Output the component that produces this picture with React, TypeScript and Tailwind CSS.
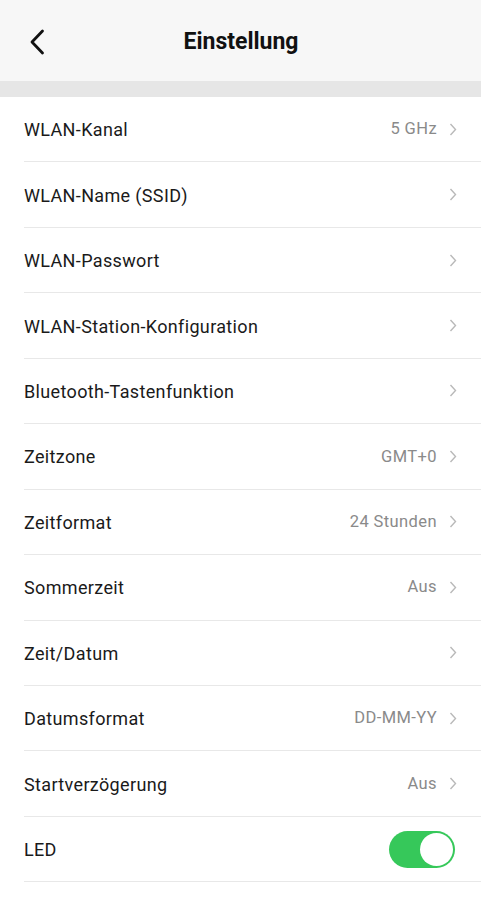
import React from "react";

const rows: { label: string; value?: string; toggle?: boolean }[] = [
  { label: "WLAN-Kanal", value: "5 GHz" },
  { label: "WLAN-Name (SSID)" },
  { label: "WLAN-Passwort" },
  { label: "WLAN-Station-Konfiguration" },
  { label: "Bluetooth-Tastenfunktion" },
  { label: "Zeitzone", value: "GMT+0" },
  { label: "Zeitformat", value: "24 Stunden" },
  { label: "Sommerzeit", value: "Aus" },
  { label: "Zeit/Datum" },
  { label: "Datumsformat", value: "DD-MM-YY" },
  { label: "Startverzögerung", value: "Aus" },
  { label: "LED", toggle: true },
];

function Chevron() {
  return (
    <svg width="8" height="13" viewBox="0 0 8 13" className="ml-[12px]">
      <path d="M1.5 1 L6.5 6.5 L1.5 12" fill="none" stroke="#b9b9b9" strokeWidth="1.4" />
    </svg>
  );
}

export default function App() {
  return (
    <div className="w-[481px] h-[900px] bg-white overflow-hidden" style={{ fontFamily: "Roboto, 'Noto Sans', sans-serif" }}>
      <div className="h-[81px] bg-[#f7f7f7] relative flex items-center justify-center">
        <svg width="16" height="26" viewBox="0 0 16 26" className="absolute left-[29px] top-[29px]">
          <path d="M13.5 2 L3 13 L13.5 24" fill="none" stroke="#111" strokeWidth="2.8" strokeLinecap="round" strokeLinejoin="round" />
        </svg>
        <span className="text-[23px] font-bold text-[#111] mt-[4px] ml-[1px]">Einstellung</span>
      </div>
      <div className="h-[16px] bg-[#e6e6e6]" />
      <div className="pl-[24px]">
        {rows.map((r) => (
          <div key={r.label} className="h-[65.45px] border-b border-[#e8e8e8] flex items-center pr-[24px]">
            <span className="flex-1 text-[18px] tracking-[0.35px] text-[#1a1a1a] mt-[1px]">{r.label}</span>
            {r.toggle ? (
              <div className="w-[66px] h-[37px] rounded-full bg-[#36c85a] flex items-center justify-end pr-[2px] mr-[2px]">
                <div className="w-[33px] h-[33px] rounded-full bg-white" />
              </div>
            ) : (
              <>
                {r.value && <span className="text-[16.5px] tracking-[0.4px] text-[#8a8a8a] mt-[1px]">{r.value}</span>}
                <Chevron />
              </>
            )}
          </div>
        ))}
      </div>
    </div>
  );
}
